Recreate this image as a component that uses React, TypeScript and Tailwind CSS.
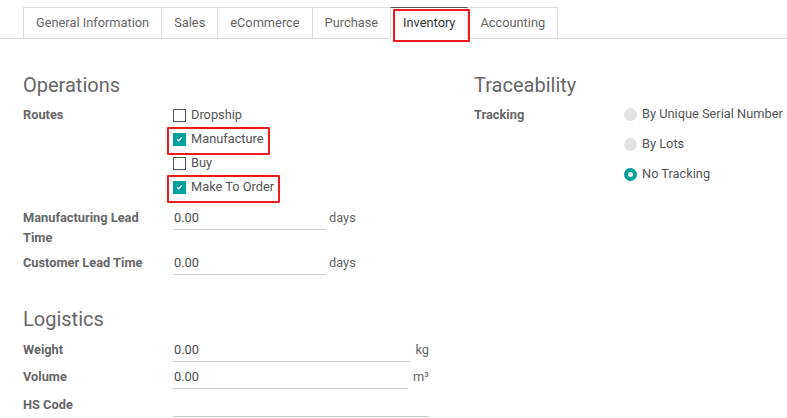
import type { ReactNode } from "react";

const TABS = ["General Information", "Sales", "eCommerce", "Purchase", "Inventory", "Accounting"];

const ROUTES = [
  { label: "Dropship", checked: false, marked: false },
  { label: "Manufacture", checked: true, marked: true },
  { label: "Buy", checked: false, marked: false },
  { label: "Make To Order", checked: true, marked: true },
];

const TRACKING = [
  { label: "By Unique Serial Number", checked: false },
  { label: "By Lots", checked: false },
  { label: "No Tracking", checked: true },
];

const Checkbox = ({ checked }: { checked: boolean }) =>
  checked ? (
    <span className="w-[13px] h-[13px] bg-[#00a09d] flex items-center justify-center">
      <svg width="7" height="6" viewBox="0 0 7 6">
        <path d="M1 3.2 L2.8 4.8 L6 1.2" stroke="white" strokeWidth="1.3" fill="none" />
      </svg>
    </span>
  ) : (
    <span className="w-[13px] h-[13px] border border-[#555] bg-white" />
  );

const Radio = ({ checked }: { checked: boolean }) =>
  checked ? (
    <span className="w-[13px] h-[13px] rounded-full bg-[#00a09d] flex items-center justify-center">
      <span className="w-[5px] h-[5px] rounded-full bg-white" />
    </span>
  ) : (
    <span className="w-[13px] h-[13px] rounded-full bg-[#e2e2e2]" />
  );

const Heading = ({ children }: { children: ReactNode }) => (
  <h2 className="text-[20px] leading-[24px] text-[#666]">{children}</h2>
);

const Label = ({ children }: { children: ReactNode }) => (
  <div className="w-[150px] shrink-0 font-bold text-[#666] pr-2">{children}</div>
);

const Field = ({ value, width }: { value: string; width: string }) => (
  <div className={`${width} h-[22px] border-b border-[#ccc] text-[#4c4c4c] leading-[20px] pl-[1px]`}>
    {value}
  </div>
);

export default function App() {
  return (
    <div className="w-[787px] h-[418px] overflow-hidden bg-white text-[12.8px] leading-[20px] text-[#4c4c4c] font-['Roboto',sans-serif]">
      {/* tabs */}
      <div className="pt-[7px] border-b border-[#dcdcdc]">
        <ul className="flex pl-[23px] h-[32px] -mb-px">
          {TABS.map((tab) => {
            const active = tab === "Inventory";
            return (
              <li
                key={tab}
                className={`relative px-3 flex items-center -ml-px first:ml-0 border ${
                  active
                    ? "border-[#dcdcdc] border-t-[#555] border-b-white text-[#333] bg-white z-10"
                    : "border-[#dcdcdc] text-[#666]"
                }`}
              >
                {tab}
                {active && (
                  <span className="absolute left-[2px] right-[-3px] top-[1px] bottom-[-4px] border-2 border-[#ee1c1c] rounded-[1px]" />
                )}
              </li>
            );
          })}
        </ul>
      </div>

      <div className="flex pl-[23px] pt-[34px]">
        {/* left column */}
        <div className="w-[451px] shrink-0">
          <Heading>Operations</Heading>
          <div className="flex mt-[6px]">
            <Label>
              <div className="h-[24px] flex items-center">Routes</div>
            </Label>
            <div className="flex flex-col items-start">
              {ROUTES.map((r) => (
                <div key={r.label} className="relative h-[24px] flex items-center gap-[5px]">
                  <Checkbox checked={r.checked} />
                  <span className="text-[#555]">{r.label}</span>
                  {r.marked && (
                    <span className="absolute left-[-6px] right-[-6px] top-0 bottom-[-4px] border-2 border-[#ee1c1c] rounded-[1px]" />
                  )}
                </div>
              ))}
            </div>
          </div>

          <div className="flex mt-[9px]">
            <Label>Manufacturing Lead Time</Label>
            <div className="flex gap-[3px]">
              <Field value="0.00" width="w-[153px]" />
              <span className="text-[#666]">days</span>
            </div>
          </div>
          <div className="flex mt-[5px]">
            <Label>Customer Lead Time</Label>
            <div className="flex gap-[3px]">
              <Field value="0.00" width="w-[153px]" />
              <span className="text-[#666]">days</span>
            </div>
          </div>

          <div className="mt-[32px]">
            <Heading>Logistics</Heading>
          </div>
          <div className="flex mt-[9px]">
            <Label>Weight</Label>
            <div className="w-[256px] flex gap-[5px]">
              <Field value="0.00" width="flex-1" />
              <span className="text-[#666]">kg</span>
            </div>
          </div>
          <div className="flex mt-[5px]">
            <Label>Volume</Label>
            <div className="w-[256px] flex gap-[5px]">
              <Field value="0.00" width="flex-1" />
              <span className="text-[#666] w-[16px]">m³</span>
            </div>
          </div>
          <div className="flex mt-[6px]">
            <Label>HS Code</Label>
            <Field value="" width="w-[256px]" />
          </div>
        </div>

        {/* right column */}
        <div className="flex-1">
          <Heading>Traceability</Heading>
          <div className="flex mt-[6px]">
            <Label>
              <div className="h-[24px] flex items-center">Tracking</div>
            </Label>
            <div className="flex flex-col gap-[6px] -mt-px">
              {TRACKING.map((t) => (
                <div key={t.label} className="h-[24px] flex items-center gap-[5px]">
                  <Radio checked={t.checked} />
                  <span className="text-[#555] whitespace-nowrap">{t.label}</span>
                </div>
              ))}
            </div>
          </div>
        </div>
      </div>
    </div>
  );
}
